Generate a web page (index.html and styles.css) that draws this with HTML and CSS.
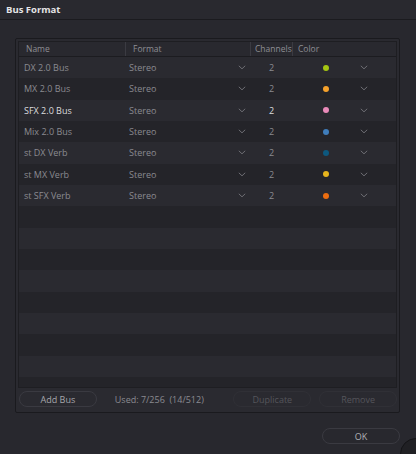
FILE: index.html
```html
<!DOCTYPE html>
<html lang="en">
<head>
    <meta charset="UTF-8">
    <title>Bus Format</title>
    <link rel="stylesheet" href="styles.css">
</head>
<body>
    <div class="dialog">
        <div class="titlebar">Bus Format</div>

        <div class="content">
            <div class="panel">
                <div class="table">
                    <div class="thead">
                        <div class="th">Name</div>
                        <div class="th">Format</div>
                        <div class="th">Channels</div>
                        <div class="th">Color</div>
                    </div>
                    <div class="tbody" id="busRows"></div>
                </div>

                <div class="footer">
                    <button class="pill">Add Bus</button>
                    <span class="usage">Used: 7/256&nbsp;&nbsp;(14/512)</span>
                    <button class="pill disabled">Duplicate</button>
                    <button class="pill disabled">Remove</button>
                </div>
            </div>

            <div class="actions">
                <button class="pill ok">OK</button>
            </div>
        </div>

        <div class="grip"></div>
    </div>

    <script>
        const buses = [
            { name: 'DX 2.0 Bus', color: '#a5c512' },
            { name: 'MX 2.0 Bus', color: '#f5a12b' },
            { name: 'SFX 2.0 Bus', color: '#e98ab9', selected: true },
            { name: 'Mix 2.0 Bus', color: '#3f7dbb' },
            { name: 'st DX Verb', color: '#0d587e' },
            { name: 'st MX Verb', color: '#e6b41d' },
            { name: 'st SFX Verb', color: '#ec6d10' }
        ];

        const chevron = '<svg class="chev" width="8" height="5" viewBox="0 0 8 5"><polyline points="0.8,0.8 4,3.8 7.2,0.8" fill="none" stroke="currentColor" stroke-width="1"/></svg>';
        const body = document.getElementById('busRows');

        buses.forEach(bus => {
            const row = document.createElement('div');
            row.className = 'row' + (bus.selected ? ' selected' : '');
            row.innerHTML =
                `<div class="td name">${bus.name}</div>` +
                `<div class="td format"><span>Stereo</span>${chevron}</div>` +
                `<div class="td channels">2</div>` +
                `<div class="td color"><span class="dot" style="background:${bus.color}"></span>${chevron}</div>`;
            body.appendChild(row);
        });

        // fill the rest of the list with empty stripes
        for (let i = buses.length; i < 16; i++) {
            const row = document.createElement('div');
            row.className = 'row';
            body.appendChild(row);
        }
    </script>
</body>
</html>
```

FILE: styles.css
```css
body {
    margin: 0;
    padding: 0;
    background-color: #28282e;
    font-family: "Open Sans", "Noto Sans", sans-serif;
    font-size: 9px;
    color: #8a8a90;
}

.dialog {
    position: relative;
    width: 416px;
    height: 454px;
    overflow: hidden;
}

.titlebar {
    height: 19px;
    line-height: 19px;
    padding-left: 6px;
    font-size: 9.5px;
    font-weight: bold;
    color: #e4e4e6;
    background-color: #29292f;
    border-bottom: 1px solid #1b1b1f;
}

.content {
    padding: 18px 16px 0 15px;
}

.panel {
    border: 1px solid #1a1a1e;
    border-radius: 2px;
    background-color: #2a2a30;
    padding: 2px 2px 5px 2px;
}

.table {
    height: 345px;
    border: 1px solid #1e1e22;
    overflow: hidden;
    background-color: #252429;
}

.thead,
.row {
    display: grid;
    grid-template-columns: 106px 125px 42px 1fr;
    align-items: center;
}

.thead {
    height: 14px;
    background-color: #29292f;
    border-bottom: 1px solid #1c1c20;
}

.th {
    height: 14px;
    line-height: 14px;
    padding-left: 7px;
    border-left: 1px solid #3b3b42;
    white-space: nowrap;
    font-size: 8.5px;
    color: #8e8e94;
}

.th:first-child {
    border-left: none;
    padding-left: 7px;
}

.th:nth-child(3) {
    padding-left: 4px;
}

.th:nth-child(4) {
    padding-left: 5px;
}

.row {
    height: 21.33px;
    background-color: #2a2a30;
}

.row:nth-child(even) {
    background-color: #242429;
}

.td {
    display: flex;
    align-items: center;
    white-space: nowrap;
}

.name {
    padding-left: 5px;
}

.format {
    padding-left: 4px;
    justify-content: space-between;
    padding-right: 4px;
}

.channels {
    justify-content: center;
    padding-left: 1px;
}

.color {
    padding-left: 31px;
    padding-right: 28px;
    justify-content: space-between;
}

.chev {
    color: #6e6e74;
}

.dot {
    width: 6px;
    height: 6px;
    border-radius: 50%;
}

.row.selected .name,
.row.selected .channels {
    color: #dcdcde;
}

.footer {
    display: flex;
    align-items: center;
    margin-top: 3px;
    margin-left: 1px;
}

.pill {
    width: 78px;
    height: 16px;
    padding: 0;
    border: 1px solid #3a3a41;
    border-radius: 8px;
    background-color: transparent;
    font-family: inherit;
    font-size: 9px;
    color: #a6a6ab;
}

.pill.disabled {
    color: #55555b;
    border-color: #303036;
}

.usage {
    margin-left: 18px;
    width: 119px;
    color: #8a8a90;
}

.footer .pill.disabled + .pill.disabled {
    margin-left: 8px;
}

.actions {
    display: flex;
    justify-content: flex-end;
    margin-top: 15px;
}

.ok {
    color: #b0b0b5;
}

/* corner grip peeking in at the bottom right */
.grip {
    position: absolute;
    left: 400px;
    top: 438px;
    width: 30px;
    height: 30px;
    border: 1px solid #141417;
    border-radius: 50%;
    background-color: #202024;
}
```
